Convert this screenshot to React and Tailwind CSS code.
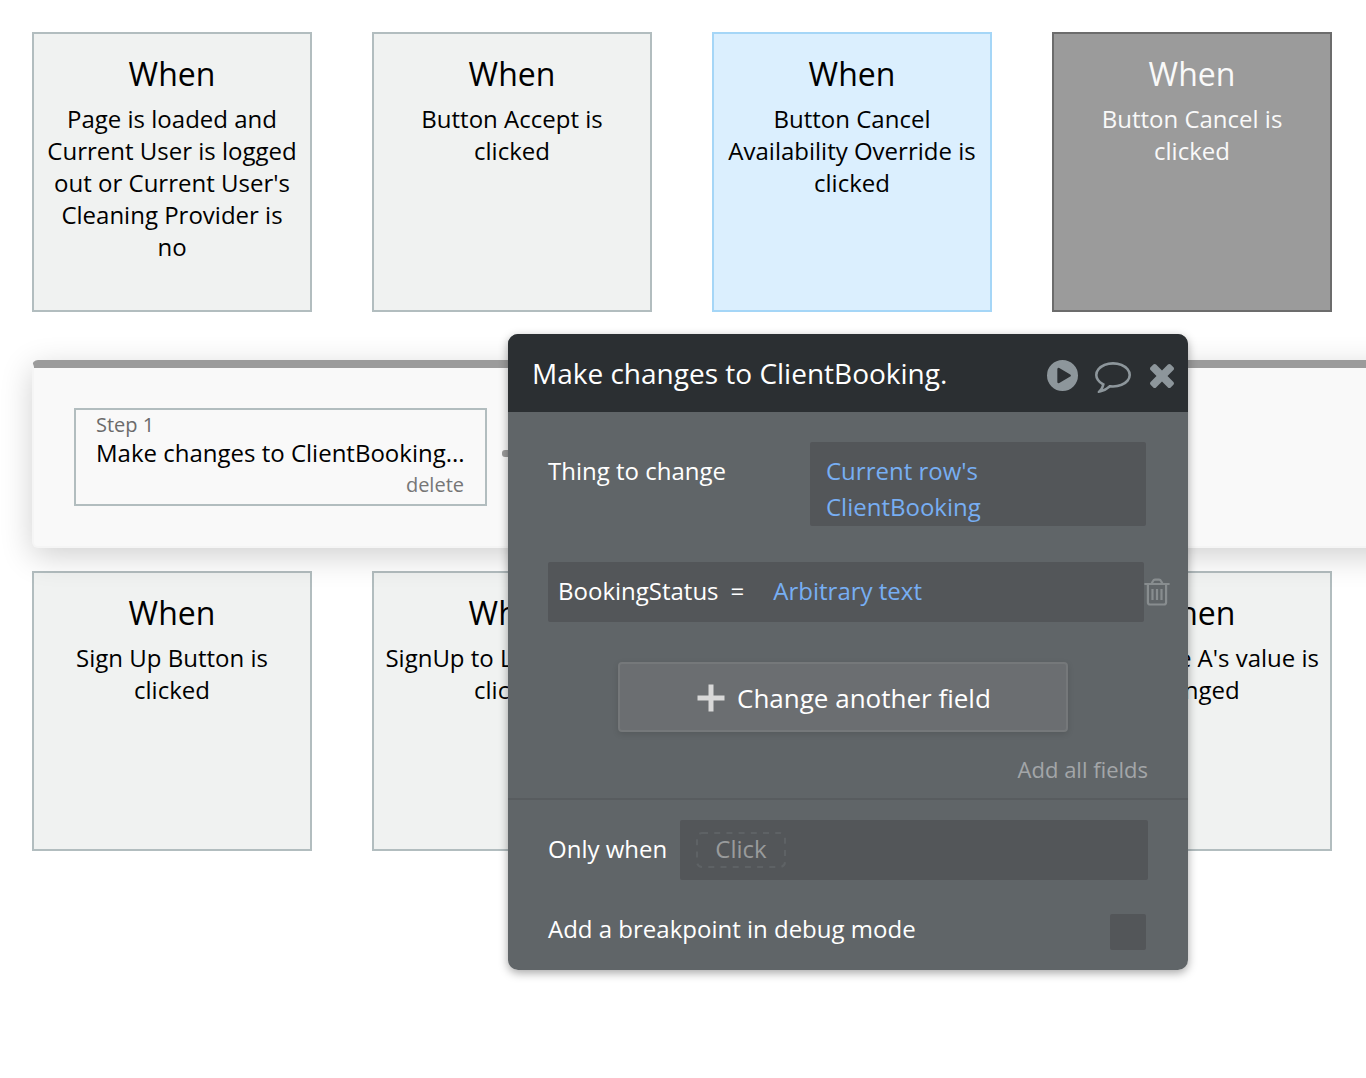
const tones = {
  plain: 'border-[#b2bdbf] bg-[#f0f2f1] text-black',
  blue: 'border-[#a5d6f7] bg-[#dbeffe] text-black',
  active: 'border-[#6c6c6c] bg-[#9b9b9b] text-[#f9f9f9]',
};

const firstRow = [
  { lines: ['Page is loaded and', 'Current User is logged', "out or Current User's", 'Cleaning Provider is', 'no'], tone: 'plain' },
  { lines: ['Button Accept is', 'clicked'], tone: 'plain' },
  { lines: ['Button Cancel', 'Availability Override is', 'clicked'], tone: 'blue' },
  { lines: ['Button Cancel is', 'clicked'], tone: 'active' },
];

const secondRow = [
  { lines: ['Sign Up Button is', 'clicked'], tone: 'plain' },
  { lines: ['SignUp to Login Text is', 'clicked'], tone: 'plain' },
  { lines: [], tone: 'plain' },
  { lines: ["Input Table A's value is", 'changed'], tone: 'plain' },
];

function EventCard({ lines, tone }) {
  return (
    <div className={`h-[280px] w-[280px] shrink-0 border-2 pt-5 text-center ${tones[tone]}`}>
      {lines.length > 0 && <div className="mb-[9px] text-[32px] leading-10">When</div>}
      {lines.map((line) => (
        <div key={line} className="whitespace-nowrap text-[24px] leading-8">{line}</div>
      ))}
    </div>
  );
}

function CardRow({ cards }) {
  return (
    <div className="flex gap-[60px] pl-8">
      {cards.map((card, i) => <EventCard key={i} {...card} />)}
    </div>
  );
}

function PlayIcon() {
  return (
    <svg className="h-[31px] w-[31px]" viewBox="128 128 1536 1536" fill="currentColor">
      <path fillRule="evenodd" d="M896 128a768 768 0 1 0 0 1536a768 768 0 1 0 0-1536zM1312 896q0 37-32 55l-544 320q-15 9-32 9-16 0-32-8-32-19-32-56v-640q0-37 32-56 33-18 64 1l544 320q32 18 32 55z" />
    </svg>
  );
}

function CommentIcon() {
  return (
    <svg className="h-[31px] w-9" viewBox="0 256 1792 1536" fill="currentColor">
      <path d="M896 384q-204 0-381.5 69.5t-282 187.5-104.5 255q0 112 71.5 213.5t201.5 175.5l87 50-27 96q-24 91-70 172 152-63 275-171l43-38 57 6q69 8 130 8 204 0 381.5-69.5t282-187.5 104.5-255-104.5-255-282-187.5-381.5-69.5zm896 512q0 174-120 321.5t-326 233-450 85.5q-70 0-145-8-198 175-460 242-49 14-114 22h-5q-15 0-27-10.5t-16-27.5v-1q-3-4-.5-12t2-10 4.5-9.5l6-9 7-8.5 8-9q7-8 31-34.5t34.5-38 31-39.5 32.5-51 27-59 26-76q-157-89-247.5-220t-90.5-281q0-174 120-321.5t326-233 450-85.5 450 85.5 326 233 120 321.5z" />
    </svg>
  );
}

function CloseIcon() {
  return (
    <svg className="h-6 w-6" viewBox="302 366 1188 1188" fill="currentColor">
      <path d="M1490 1322q0 40-28 68l-136 136q-28 28-68 28t-68-28l-294-294-294 294q-28 28-68 28t-68-28l-136-136q-28-28-28-68t28-68l294-294-294-294q-28-28-28-68t28-68l136-136q28-28 68-28t68 28l294 294 294-294q28-28 68-28t68 28l136 136q28 28 28 68t-28 68l-294 294 294 294q28 28 28 68z" />
    </svg>
  );
}

function TrashIcon() {
  return (
    <svg className="h-7 w-[26px] text-[#888d8f]" viewBox="0 0 26 28" fill="none" stroke="currentColor" strokeWidth="2.2">
      <path d="M.4 6h25.2M7.5 5.7L9 2.9Q9.6 1.7 11 1.7h4Q16.4 1.7 17 2.9l1.5 2.8M3.9 6.5v17.7q0 2.3 2.3 2.3h13.6q2.3 0 2.3-2.3V6.5" />
      <path d="M8.5 11v11M13 11v11M17.5 11v11" />
    </svg>
  );
}

function StepStrip() {
  return (
    <div className="relative mt-12 mb-[23px] ml-8 flex h-[188px] w-[1500px] items-start rounded-[6px] border-2 border-t-8 border-[#f5f5f5] border-t-[#9b9b9b] bg-[#f9f9f9] pt-10 pl-10 shadow-[0_8px_32px_rgba(0,0,0,0.19)]">
      <div className="h-[98px] w-[413px] border-2 border-[#b2bdbf] pr-[21px] pl-5">
        <div className="text-[20px] leading-[30px] text-[#6b6b6b]">Step 1</div>
        <div className="-mt-px mb-px whitespace-nowrap text-[24px] leading-7 text-black">Make changes to ClientBooking...</div>
        <div className="pt-[2px] text-right text-[20px] leading-[30px] text-[#767676]">delete</div>
      </div>
      <div className="mt-[42px] ml-[15px] h-[7px] w-20 rounded-[3px] bg-[#9b9b9b]" />
    </div>
  );
}

function PropertyEditor() {
  return (
    <div className="absolute top-[334px] left-[508px] h-[636px] w-[680px] overflow-hidden rounded-[10px] bg-[#606568] text-[24px] text-white">
      <div className="flex h-[78px] items-center bg-[#2b2f32] pl-6 pt-[3px]">
        <div className="flex-1 whitespace-nowrap pb-1 text-[28px]">Make changes to ClientBooking.</div>
        <div className="flex items-center pr-[14px] text-[#8d969b]">
          <div className="mt-px"><PlayIcon /></div>
          <div className="mt-[5px] ml-[17px]"><CommentIcon /></div>
          <div className="mt-[2px] ml-[19px]"><CloseIcon /></div>
        </div>
      </div>
      <div className="flex h-[114px] items-start pt-[30px] pl-10">
        <div className="w-[262px] pt-[11px] leading-9">Thing to change</div>
        <div className="h-[84px] w-[336px] rounded-[2px] bg-[#535659] pt-[11px] pl-4 leading-9 text-[#77aef3]">
          Current row's<br />ClientBooking
        </div>
      </div>
      <div className="mt-9 flex items-center pl-10">
        <div className="flex h-[60px] w-[596px] items-center whitespace-pre rounded-[2px] bg-[#535659] pb-[2px] pl-[10px]">
          <span>BookingStatus</span>
          <span className="ml-3">=</span>
          <span className="ml-[29px] text-[#77aef3]">Arbitrary text</span>
        </div>
        <TrashIcon />
      </div>
      <div className="mt-10 ml-[110px] flex h-[70px] w-[450px] items-center rounded-[4px] border-2 border-[#75787a] bg-[#6b6e71] pl-[77px] text-[26px] shadow-[0_2px_6px_rgba(0,0,0,0.12)]">
        <svg className="mt-[2px] h-7 w-7 text-[#d8d8d8]" viewBox="0 0 28 28" fill="none" stroke="currentColor" strokeWidth="5">
          <path d="M.5 14h27M14 .5v27" />
        </svg>
        <span className="ml-3 pt-[2px]">Change another field</span>
      </div>
      <div className="flex h-[66px] items-center justify-end pt-[9px] pr-10 text-[22px] text-[#a3a6a8]">Add all fields</div>
      <div className="h-[2px] bg-[#585c5f]" />
      <div className="mt-5 flex h-[60px] items-center pl-10">
        <div className="w-[132px] whitespace-nowrap pb-[2px]">Only when</div>
        <div className="flex h-[60px] w-[468px] items-center rounded-[2px] bg-[#535659] pl-4">
          <div className="relative flex h-9 w-[90px] items-center justify-center pb-[2px] text-[#999b9c]">
            <svg className="absolute inset-0 h-9 w-[90px] text-[#5e6265]" viewBox="0 0 90 36" fill="none" stroke="currentColor" strokeWidth="2">
              <rect x="1" y="1" width="88" height="34" rx="5" strokeDasharray="6 6.2" />
            </svg>
            Click
          </div>
        </div>
      </div>
      <div className="mt-[34px] flex items-start justify-between pr-[42px] pl-10">
        <div className="-mt-px leading-8">Add a breakpoint in debug mode</div>
        <div className="h-9 w-9 rounded-[2px] bg-[#535659]" />
      </div>
    </div>
  );
}

export default function App() {
  return (
    <div className="relative h-[1078px] w-[1366px] overflow-hidden bg-white pt-8 font-['Open_Sans',sans-serif]">
      <CardRow cards={firstRow} />
      <StepStrip />
      <CardRow cards={secondRow} />
      <div className="absolute top-[334px] left-[508px] h-[636px] w-[680px] rounded-[10px] shadow-[0_3px_10px_rgba(0,0,0,0.35)]" />
      <PropertyEditor />
    </div>
  );
}
